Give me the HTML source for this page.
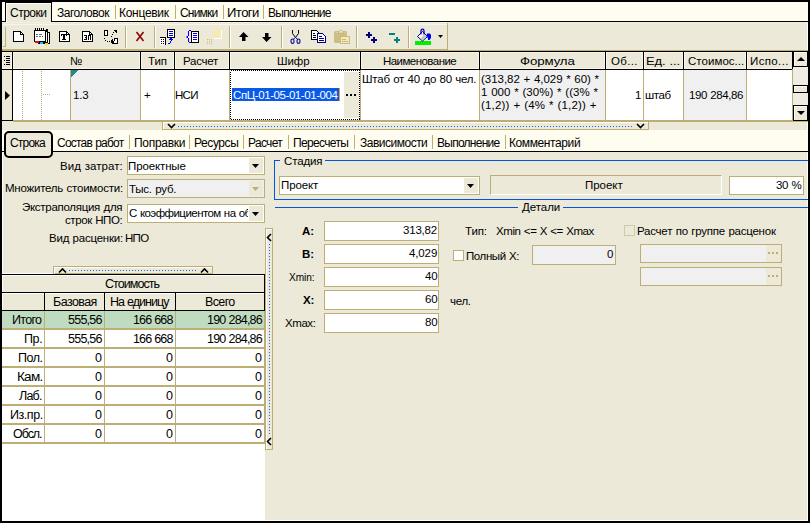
<!DOCTYPE html>
<html><head><meta charset="utf-8">
<style>
*{margin:0;padding:0;box-sizing:border-box}
html,body{width:810px;height:523px;overflow:hidden;background:#000}
body{position:relative;font-family:"Liberation Sans",sans-serif;font-size:11.5px;letter-spacing:-0.1px;word-spacing:0.5px;color:#000}
.a{position:absolute}
.t{position:absolute;white-space:nowrap;line-height:13px}
.ol{background:#BDAE76}
.bk{background:#000}
.wh{background:#fff}
.bgc{background:#ECE9D8}
.cr{background:#FFFDF0}
.gr{background:#F0F0F0}
.c{text-align:center}
.r{text-align:right}
.fld{position:absolute;border:1px solid #BDAE76;background:#fff}
.tb{font-size:12px}
.sm{font-size:12.5px;letter-spacing:-0.7px}
.blu{background:#0055E5}
svg{position:absolute;overflow:visible}
</style></head><body>
<!-- main window bg -->
<div class="a bgc" style="left:2px;top:2px;width:806px;height:519px"></div>
<div class="a" style="left:2px;top:520px;width:806px;height:1px;background:#FFFDF0"></div>
<div class="a" style="left:807px;top:22px;width:1px;height:499px;background:#FFFDF0"></div>

<!-- ===== top tab strip ===== -->
<div class="a cr" style="left:2px;top:2px;width:806px;height:19px"></div>
<div class="a bk" style="left:2px;top:21px;width:806px;height:1px"></div>
<div class="a bk" style="left:5px;top:2px;width:1px;height:20px"></div>
<div class="a bgc" style="left:6px;top:2px;width:45px;height:20px;border-top:1px solid #000;"></div>
<div class="a" style="left:6px;top:3px;width:1px;height:19px;background:#fff"></div>
<div class="a" style="left:6px;top:3px;width:45px;height:1px;background:#fff"></div>
<div class="a bk" style="left:51px;top:2px;width:1px;height:20px"></div>
<div class="a ol" style="left:115px;top:5px;width:1px;height:14px"></div>
<div class="a ol" style="left:175px;top:5px;width:1px;height:14px"></div>
<div class="a ol" style="left:223px;top:5px;width:1px;height:14px"></div>
<div class="a ol" style="left:263px;top:5px;width:1px;height:14px"></div>

<!-- ===== toolbar ===== -->
<div class="a" style="left:2px;top:22px;width:806px;height:1px;background:#F2F0E6"></div><div class="a" style="left:2px;top:24px;width:446px;height:1px;background:#F5F4EF"></div>
<div class="a ol" style="left:447px;top:23px;width:1px;height:27px"></div>
<div class="a ol" style="left:2px;top:49px;width:446px;height:1px"></div>
<div class="a ol" style="left:2px;top:50px;width:806px;height:1px"></div>
<!-- grip -->
<div class="a ol" style="left:5px;top:27px;width:1px;height:20px"></div>
<div class="a ol" style="left:3px;top:46px;width:3px;height:1px"></div>
<!-- separators -->
<div class="a ol" style="left:125px;top:26px;width:1px;height:22px"></div><div class="a wh" style="left:126px;top:26px;width:1px;height:22px"></div>
<div class="a ol" style="left:154px;top:26px;width:1px;height:22px"></div><div class="a wh" style="left:155px;top:26px;width:1px;height:22px"></div>
<div class="a ol" style="left:229px;top:26px;width:1px;height:22px"></div><div class="a wh" style="left:230px;top:26px;width:1px;height:22px"></div>
<div class="a ol" style="left:281px;top:26px;width:1px;height:22px"></div><div class="a wh" style="left:282px;top:26px;width:1px;height:22px"></div>
<div class="a ol" style="left:356px;top:26px;width:1px;height:22px"></div><div class="a wh" style="left:357px;top:26px;width:1px;height:22px"></div>
<div class="a ol" style="left:408px;top:26px;width:1px;height:22px"></div><div class="a wh" style="left:409px;top:26px;width:1px;height:22px"></div>
<svg width="810" height="60" style="left:0;top:0" shape-rendering="crispEdges">
<!-- icon1 new doc -->
<path d="M13.5 31.5H20.5L23.5 34.5V41.5H13.5Z" fill="#fff" stroke="#000"/>
<path d="M20.5 31.5V34.5H23.5" fill="none" stroke="#000"/>
<!-- icon2 notepad -->
<rect x="38.5" y="32.5" width="11" height="11" fill="#fff" stroke="#000"/>
<rect x="36.5" y="31.5" width="11" height="11" fill="#fff" stroke="#000"/>
<rect x="34.5" y="30.5" width="11" height="11" fill="#fff" stroke="#000"/>
<path d="M35 30V28M37 30V28M39 30V28M41 30V28M43 30V28" stroke="#000"/>
<rect x="46" y="29" width="2" height="2" fill="#000"/>
<path d="M36 34H38M39 34H42M36 36H38M39 36H41M42 36H43" stroke="#666"/>
<rect x="35" y="41" width="4" height="2" fill="#f00"/>
<rect x="40" y="42" width="3" height="2" fill="#0cf"/>
<rect x="45" y="43" width="3" height="2" fill="#fd0"/>
<!-- icon3 T doc -->
<path d="M59.5 31.5H66.5L69.5 34.5V41.5H59.5Z" fill="#fff" stroke="#000"/>
<path d="M66.5 31.5V34.5H69.5" fill="none" stroke="#000"/>
<path d="M61 34H67V35H61ZM61 35H62V36H61ZM66 35H67V36H66ZM63 35H65V39H63ZM62 39H66V40H62Z" fill="#000"/>
<!-- icon4 doc -->
<path d="M82.5 31.5H89.5L92.5 34.5V41.5H82.5Z" fill="#fff" stroke="#000"/>
<path d="M89.5 31.5V34.5H92.5" fill="none" stroke="#000"/>
<path d="M84 35H87V40H84V39H86V38H85V37H86V36H84ZM88 35H91V40H90V36H89V40H88Z" fill="#000"/>
<!-- icon5 -->
<path d="M104.5 30.5H107.5V35.5H104.5Z" fill="#fff" stroke="#000"/>
<path d="M114.5 38.5H117.5V43.5H113.5Z" fill="#fff" stroke="#000"/>
<path d="M104 38h1v1h-1zM105 40h1v1h-1zM107 41h1v1h-1zM109 41h1v1h-1zM112 39h1v5h-1zM111 40h1v3h-1zM111 36h1v1h-1zM112 34h1v1h-1zM113 32h1v1h-1zM114 30h3v1h-3zM116 31h1v2h-1zM115 31h1v1h-1z" fill="#000"/>
<!-- X -->
<path d="M136.5 32L143.5 41M143.5 32L136.5 41" stroke="#8E0C0C" stroke-width="1.7" shape-rendering="auto"/>
<!-- icon7 -->
<rect x="167" y="29" width="8" height="9" fill="#000"/>
<rect x="168" y="30" width="6" height="7" fill="#fff"/>
<path d="M169 31.5H173M169 33.5H173M169 35.5H173" stroke="#00f" shape-rendering="crispEdges"/>
<path d="M160 37h5v1h-5zM165 37h1v8h-1z" fill="#000"/>
<rect x="160" y="38" width="5" height="7" fill="#fff"/>
<path d="M161 39h1v1h-1zM163 39h1v1h-1zM161 41h1v1h-1zM163 41h1v1h-1zM161 43h1v1h-1zM163 43h1v1h-1z" fill="#000"/>
<path d="M168 43h2v1h-2zM170 41h1v2h-1zM171 40h1v1h-1zM169 39h4v1h-4zM170 38h2v1h-2z" fill="#00f"/>
<!-- icon8 brace -->
<path d="M189 30h2v1h-2zM188 31h1v5h-1zM187 36h1v1h-1zM186 36.5h1v1h-1zM187 37h1v1h-1zM188 38h1v4h-1zM189 42h2v1h-2z" fill="#00f" shape-rendering="auto"/>
<path d="M188.5 31V36M188.5 38V42" stroke="#00f" stroke-width="1"/>
<rect x="191" y="31" width="8" height="12" fill="#000"/>
<rect x="192" y="32" width="6" height="10" fill="#fff"/>
<path d="M193 33.5H197M193 35.5H197M193 37.5H197M193 39.5H197" stroke="#00f"/>
<!-- icon9 disabled -->
<rect x="213" y="29" width="8" height="9" fill="#F5E9B8"/>
<path d="M221 30V38H214" stroke="#fff" fill="none"/>
<path d="M207 39h1v1h-1zM209 39h1v1h-1zM207 41h1v1h-1zM209 41h1v1h-1zM207 43h1v1h-1zM209 43h1v1h-1z" fill="#C9B977"/>
<path d="M211 39h1v6h-1z" fill="#D8CC9A"/>
<!-- up arrow -->
<path d="M243.5 32L248.5 37H245.5V41H242V37H239Z" fill="#000" shape-rendering="auto"/>
<!-- down arrow -->
<path d="M266.5 42L271.5 37H268.5V33H265V37H262Z" fill="#000" shape-rendering="auto"/>
<!-- scissors -->
<path d="M292.5 30V33.5L295.5 37.5M298.5 30V33.5L295.5 37.5" stroke="#000" stroke-width="1" fill="none" shape-rendering="auto"/>
<ellipse cx="292.5" cy="41.2" rx="1.5" ry="2.2" fill="none" stroke="#10109A" stroke-width="1.1" shape-rendering="auto"/>
<ellipse cx="298.5" cy="41.2" rx="1.5" ry="2.2" fill="none" stroke="#10109A" stroke-width="1.1" shape-rendering="auto"/>
<path d="M295.5 37.5L293.5 39M295.5 37.5L297.5 39" stroke="#10109A" stroke-width="1" shape-rendering="auto"/>
<!-- copy -->
<path d="M311.5 30.5H316.5L318.5 32.5V39.5H311.5Z" fill="#fff" stroke="#000"/>
<path d="M313 33H315M313 35H316M313 37H316" stroke="#000"/>
<path d="M317.5 33.5H322.5L325.5 36.5V42.5H317.5Z" fill="#fff" stroke="#000080"/>
<path d="M319 36H322M319 38H324M319 40H324" stroke="#000080"/>
<!-- paste disabled -->
<rect x="334" y="31" width="13" height="12" rx="1.5" fill="#CDBE86" shape-rendering="auto"/>
<path d="M336 32.5H345" stroke="#DCD0A4"/>
<path d="M338 33L340.5 30H341.5L344 33Z" fill="#F3EDD2" stroke="#BFAE6E" stroke-width="0.8" shape-rendering="auto"/>
<rect x="340.5" y="36.5" width="9" height="7" fill="#F2E8BC" stroke="#C9B97E"/>
<path d="M342 39.5H346M342 41.5H348" stroke="#C9B97E"/>
<!-- ++ -->
<path d="M366 35H372M369 32V38M371 40H377M374 37V43" stroke="#000080" stroke-width="2"/>
<!-- -+ -->
<path d="M389 34H395M394 40H400M397 37V43" stroke="#008080" stroke-width="2"/>
<!-- paint bucket -->
<rect x="415" y="41" width="16" height="4" fill="#00F000"/>
<path d="M417.5 36.5L422.5 31.5L427.5 36.5L422.5 41Z" fill="#fff" stroke="#000070" stroke-width="1" shape-rendering="auto"/>
<path d="M422.5 40L426.5 36.5L424 34.5L421 38Z" fill="#C8C8C8" shape-rendering="auto"/>
<path d="M421 34.5V31Q421 29.2 422.5 29.2Q424 29.2 424 31V34.5" fill="none" stroke="#0000A0" stroke-width="1.3" shape-rendering="auto"/>
<path d="M427 33.5H430L431 35V38L429.5 40H428V37.5H426.5Z" fill="#0000F0" shape-rendering="auto"/>
<path d="M438 35H443L440.5 38Z" fill="#000" shape-rendering="auto"/>
</svg>


<!-- ===== grid ===== -->
<div class="a bk" style="left:2px;top:51px;width:806px;height:1px"></div>
<div class="a bk" style="left:2px;top:69px;width:791px;height:1px"></div>
<!-- header highlight -->
<div class="a" style="left:2px;top:52px;width:790px;height:1px;background:#F7F5EE"></div>
<div class="a" style="left:13px;top:52px;width:1px;height:17px;background:#F9F8F2"></div>
<div class="a" style="left:11px;top:52px;width:1px;height:17px;background:#F6F4EC"></div>
<div class="a" style="left:141px;top:52px;width:1px;height:17px;background:#F9F8F2"></div>
<div class="a" style="left:139px;top:52px;width:1px;height:17px;background:#F6F4EC"></div>
<div class="a" style="left:175px;top:52px;width:1px;height:17px;background:#F9F8F2"></div>
<div class="a" style="left:173px;top:52px;width:1px;height:17px;background:#F6F4EC"></div>
<div class="a" style="left:230px;top:52px;width:1px;height:17px;background:#F9F8F2"></div>
<div class="a" style="left:228px;top:52px;width:1px;height:17px;background:#F6F4EC"></div>
<div class="a" style="left:361px;top:52px;width:1px;height:17px;background:#F9F8F2"></div>
<div class="a" style="left:359px;top:52px;width:1px;height:17px;background:#F6F4EC"></div>
<div class="a" style="left:480px;top:52px;width:1px;height:17px;background:#F9F8F2"></div>
<div class="a" style="left:478px;top:52px;width:1px;height:17px;background:#F6F4EC"></div>
<div class="a" style="left:606px;top:52px;width:1px;height:17px;background:#F9F8F2"></div>
<div class="a" style="left:604px;top:52px;width:1px;height:17px;background:#F6F4EC"></div>
<div class="a" style="left:644px;top:52px;width:1px;height:17px;background:#F9F8F2"></div>
<div class="a" style="left:642px;top:52px;width:1px;height:17px;background:#F6F4EC"></div>
<div class="a" style="left:684px;top:52px;width:1px;height:17px;background:#F9F8F2"></div>
<div class="a" style="left:682px;top:52px;width:1px;height:17px;background:#F6F4EC"></div>
<div class="a" style="left:747px;top:52px;width:1px;height:17px;background:#F9F8F2"></div>
<div class="a" style="left:745px;top:52px;width:1px;height:17px;background:#F6F4EC"></div>
<div class="a" style="left:2px;top:68px;width:790px;height:1px;background:#F6F4EC"></div>
<div class="a" style="left:2px;top:52px;width:1px;height:17px;background:#F9F8F2"></div>
<!-- row bg -->
<div class="a wh" style="left:13px;top:70px;width:779px;height:50px"></div>
<div class="a gr" style="left:71px;top:70px;width:69px;height:50px"></div>
<div class="a gr" style="left:480px;top:70px;width:125px;height:50px"></div>
<div class="a gr" style="left:684px;top:70px;width:62px;height:50px"></div>
<div class="a ol" style="left:2px;top:120px;width:806px;height:2px"></div>
<!-- header col lines black -->
<div class="a bk" style="left:12px;top:51px;width:1px;height:70px"></div>
<div class="a bk" style="left:140px;top:51px;width:1px;height:19px"></div>
<div class="a bk" style="left:174px;top:51px;width:1px;height:19px"></div>
<div class="a bk" style="left:229px;top:51px;width:1px;height:19px"></div>
<div class="a bk" style="left:360px;top:51px;width:1px;height:19px"></div>
<div class="a bk" style="left:479px;top:51px;width:1px;height:19px"></div>
<div class="a bk" style="left:605px;top:51px;width:1px;height:19px"></div>
<div class="a bk" style="left:643px;top:51px;width:1px;height:19px"></div>
<div class="a bk" style="left:683px;top:51px;width:1px;height:19px"></div>
<div class="a bk" style="left:746px;top:51px;width:1px;height:19px"></div>
<div class="a bk" style="left:792px;top:51px;width:2px;height:19px"></div>
<!-- row col lines olive -->
<div class="a ol" style="left:70px;top:70px;width:1px;height:50px"></div>
<div class="a ol" style="left:140px;top:70px;width:1px;height:50px"></div>
<div class="a ol" style="left:174px;top:70px;width:1px;height:50px"></div>
<div class="a ol" style="left:229px;top:70px;width:1px;height:50px"></div>
<div class="a ol" style="left:360px;top:70px;width:1px;height:50px"></div>
<div class="a ol" style="left:479px;top:70px;width:1px;height:50px"></div>
<div class="a ol" style="left:605px;top:70px;width:1px;height:50px"></div>
<div class="a ol" style="left:643px;top:70px;width:1px;height:50px"></div>
<div class="a ol" style="left:683px;top:70px;width:1px;height:50px"></div>
<div class="a ol" style="left:746px;top:70px;width:1px;height:50px"></div>
<!-- header texts -->
<!-- row texts -->
<div class="a" style="left:232px;top:88px;width:107px;height:13px;background:#0A5AE8"></div><div class="a" style="left:339px;top:88px;width:1px;height:13px;background:#F0A020"></div>
<div class="a bgc" style="left:344px;top:72px;width:15px;height:46px"></div>
<svg width="810" height="140" style="left:0;top:0" shape-rendering="crispEdges">
<!-- header list icon -->
<path d="M4 56h1v1h-1zM6 56h4v1h-4zM6 58h4v1h-4zM4 60h1v1h-1zM6 60h4v1h-4zM6 62h4v1h-4zM4 64h1v1h-1zM6 64h4v1h-4z" fill="#000"/>
<!-- row indicator triangle -->
<path d="M5 91L10 95.5L5 100Z" fill="#000" shape-rendering="auto"/>
<!-- tree dotted lines -->
<path d="M22.5 71V120M41.5 71V120" stroke="#BDAE76" stroke-dasharray="1 1"/>
<path d="M43 94.5H51" stroke="#BDAE76" stroke-dasharray="1 1"/>
<path d="M2 120.5H13" stroke="#000"/><path d="M2 121.5H13" stroke="#ECE9D8"/>
<!-- teal corner -->
<path d="M71 70H78L71 77Z" fill="#1E8C8C"/>
<!-- focus rect -->
<rect x="230.5" y="70.5" width="129" height="49" fill="none" stroke="#000" stroke-dasharray="1 1"/>
<!-- ... button dots -->
<path d="M346 94h2v2h-2zM350 94h2v2h-2zM354 94h2v2h-2z" fill="#000"/>
<!-- scrollbar -->
<rect x="793" y="52" width="15" height="69" fill="#F5F3EC"/>
<path d="M793 67h15v18h-15z" fill="#EFEDE3"/>
<path d="M793 93h15v13h-15z" fill="#EFEDE3"/>
<rect x="793.5" y="51.5" width="14" height="15" fill="#ECE9D8" stroke="#000"/>
<path d="M794.5 66V52.5H807" stroke="#fff" fill="none"/>
<path d="M797 61H805L801 57Z" fill="#000" shape-rendering="auto"/>
<rect x="793.5" y="85.5" width="14" height="7" fill="#ECE9D8" stroke="#000"/>
<path d="M794.5 92V86.5H807" stroke="#fff" fill="none"/>
<rect x="793.5" y="105.5" width="14" height="15" fill="#ECE9D8" stroke="#000"/>
<path d="M794.5 120V106.5H807" stroke="#fff" fill="none"/>
<path d="M797 111H805L801 115Z" fill="#000" shape-rendering="auto"/>
<path d="M792.5 69V121" stroke="#BDAE76"/>
<!-- grid splitter handle -->
<rect x="162" y="122" width="487" height="8" fill="#ECE9D8"/>
<path d="M162.5 122V130M162 129.5H649M648.5 122V130" stroke="#BDAE76"/>
<path d="M163 122.5H648M163.5 122V129" stroke="#fff"/>
<path d="M168 124L171.5 127.5L175 124" fill="none" stroke="#000" stroke-width="1.6" shape-rendering="auto"/>
<path d="M637 124L640.5 127.5L644 124" fill="none" stroke="#000" stroke-width="1.6" shape-rendering="auto"/>
<path d="M178 126.5H633" stroke="#2060F0" stroke-dasharray="1 2"/>
</svg>


<!-- ===== lower tab strip ===== -->
<div class="a cr" style="left:2px;top:130px;width:806px;height:21px"></div>
<div class="a bk" style="left:2px;top:151px;width:806px;height:1px"></div>
<div class="a bgc" style="left:4px;top:131px;width:49px;height:27px;border:2px solid #000;border-radius:5px"></div>
<div class="a ol" style="left:129px;top:135px;width:1px;height:14px"></div>
<div class="a ol" style="left:189px;top:135px;width:1px;height:14px"></div>
<div class="a ol" style="left:243px;top:135px;width:1px;height:14px"></div>
<div class="a ol" style="left:288px;top:135px;width:1px;height:14px"></div>
<div class="a ol" style="left:354px;top:135px;width:1px;height:14px"></div>
<div class="a ol" style="left:432px;top:135px;width:1px;height:14px"></div>
<div class="a ol" style="left:505px;top:135px;width:1px;height:14px"></div>

<!-- ===== left form ===== -->
<div class="a" style="left:2px;top:152px;width:1px;height:292px;background:#fff"></div>
<div class="fld" style="left:127px;top:156px;width:138px;height:19px"></div>
<div class="fld" style="left:127px;top:179px;width:138px;height:19px;background:#F0F0F0"></div>
<div class="fld" style="left:127px;top:204px;width:138px;height:19px;overflow:hidden"></div>

<!-- ===== right form: Стадия ===== -->
<div class="a blu" style="left:274px;top:160px;width:1px;height:40px"></div>
<div class="a blu" style="left:274px;top:199px;width:534px;height:1px"></div>
<div class="a blu" style="left:274px;top:160px;width:6px;height:1px"></div>
<div class="a blu" style="left:325px;top:160px;width:483px;height:1px"></div>
<div class="fld" style="left:279px;top:176px;width:201px;height:19px"></div>
<div class="a" style="left:490px;top:175px;width:232px;height:20px;border-top:1px solid #BDAE76;border-left:1px solid #BDAE76;border-right:1px solid #fff;border-bottom:1px solid #fff"></div>
<div class="fld" style="left:729px;top:176px;width:75px;height:19px"></div>

<!-- ===== Детали ===== -->
<div class="a blu" style="left:275px;top:207px;width:243px;height:1px"></div>
<div class="a blu" style="left:563px;top:207px;width:245px;height:1px"></div>

<div class="fld" style="left:324px;top:221px;width:115px;height:20px"></div>
<div class="fld" style="left:324px;top:244px;width:115px;height:20px"></div>
<div class="fld" style="left:324px;top:267px;width:115px;height:20px"></div>
<div class="fld" style="left:324px;top:290px;width:115px;height:20px"></div>
<div class="fld" style="left:324px;top:313px;width:115px;height:20px"></div>
<div class="a" style="left:453px;top:250px;width:11px;height:11px;border:1px solid #BDAE76;background:#fff"></div>
<div class="fld" style="left:532px;top:245px;width:84px;height:20px;background:#F0F0F0"></div>
<div class="a" style="left:624px;top:225px;width:11px;height:11px;border:1px solid #D0C8A8"></div>
<div class="fld" style="left:640px;top:244px;width:142px;height:19px;background:#F0F0F0"></div>
<div class="fld" style="left:640px;top:267px;width:142px;height:19px;background:#F0F0F0"></div>

<!-- ===== table ===== -->
<div class="a wh" style="left:2px;top:311px;width:263px;height:209px"></div>
<div class="a" style="left:2px;top:273px;width:51px;height:1px;background:#fff"></div>
<div class="a bk" style="left:2px;top:274px;width:263px;height:1px"></div>
<div class="a bk" style="left:2px;top:292px;width:263px;height:1px"></div>
<div class="a bk" style="left:2px;top:310px;width:263px;height:1px"></div>
<div class="a bk" style="left:264px;top:274px;width:1px;height:37px"></div>
<div class="a bk" style="left:44px;top:292px;width:1px;height:19px"></div>
<div class="a bk" style="left:104px;top:292px;width:1px;height:19px"></div>
<div class="a bk" style="left:175px;top:292px;width:1px;height:19px"></div>
<div class="a" style="left:2px;top:275px;width:262px;height:1px;background:#fff"></div>
<div class="a" style="left:2px;top:293px;width:262px;height:1px;background:#fff"></div>
<div class="a bk" style="left:44px;top:292px;width:1px;height:19px"></div><div class="a bk" style="left:104px;top:292px;width:1px;height:19px"></div><div class="a bk" style="left:175px;top:292px;width:1px;height:19px"></div>
<div class="a" style="left:2px;top:311px;width:262px;height:17px;background:#C0DCC0"></div>
<div class="a ol" style="left:2px;top:328px;width:264px;height:2px"></div>
<div class="a ol" style="left:2px;top:347px;width:264px;height:2px"></div>
<div class="a ol" style="left:2px;top:366px;width:264px;height:2px"></div>
<div class="a ol" style="left:2px;top:385px;width:264px;height:2px"></div>
<div class="a ol" style="left:2px;top:404px;width:264px;height:2px"></div>
<div class="a ol" style="left:2px;top:423px;width:264px;height:2px"></div>
<div class="a ol" style="left:2px;top:442px;width:264px;height:2px"></div>
<div class="a ol" style="left:44px;top:311px;width:1px;height:133px"></div>
<div class="a ol" style="left:104px;top:311px;width:1px;height:133px"></div>
<div class="a ol" style="left:175px;top:311px;width:1px;height:133px"></div>
<div class="a ol" style="left:264px;top:311px;width:2px;height:133px"></div>
<svg width="810" height="523" style="left:0;top:0" shape-rendering="crispEdges">
<!-- combo buttons -->
<rect x="249" y="158" width="14" height="15" fill="#ECE9D8"/>
<path d="M252 164H259L255.5 168Z" fill="#000" shape-rendering="auto"/>
<rect x="249" y="181" width="14" height="15" fill="#ECE9D8"/>
<path d="M252 187H259L255.5 191Z" fill="#BDAE76" shape-rendering="auto"/>
<rect x="249" y="206" width="14" height="15" fill="#ECE9D8"/>
<path d="M252 212H259L255.5 216Z" fill="#000" shape-rendering="auto"/>
<rect x="464" y="178" width="14" height="15" fill="#ECE9D8"/>
<path d="M467 184H474L470.5 188Z" fill="#000" shape-rendering="auto"/>
<!-- ... buttons right fields -->
<rect x="766" y="245" width="15" height="17" fill="#ECE9D8"/>
<path d="M768 252h2v2h-2zM772 252h2v2h-2zM776 252h2v2h-2z" fill="#BDAE76"/>
<rect x="766" y="268" width="15" height="17" fill="#ECE9D8"/>
<path d="M768 275h2v2h-2zM772 275h2v2h-2zM776 275h2v2h-2z" fill="#BDAE76"/>
<!-- table splitter handle -->
<rect x="53" y="266" width="160" height="8" fill="#ECE9D8"/>
<path d="M53.5 266V274M53 266.5H213M212.5 266V274M53 273.5H213" stroke="#BDAE76"/>
<path d="M54 267.5H212M54.5 267V274" stroke="#fff"/>
<path d="M59 272.5L62.5 269L66 272.5" fill="none" stroke="#000" stroke-width="1.6" shape-rendering="auto"/>
<path d="M201 272.5L204.5 269L208 272.5" fill="none" stroke="#000" stroke-width="1.6" shape-rendering="auto"/>
<path d="M69 270.5H197" stroke="#2060F0" stroke-dasharray="1 2"/>
<!-- vertical splitter handle -->
<rect x="265" y="228" width="8" height="222" fill="#ECE9D8"/>
<path d="M265.5 228V450M265 228.5H273M272.5 228V450M265 449.5H273" stroke="#BDAE76"/>
<path d="M266.5 229V449M266 229.5H272" stroke="#fff"/>
<path d="M271 234L267.5 237.5L271 241" fill="none" stroke="#000" stroke-width="1.6" shape-rendering="auto"/>
<path d="M271 438L267.5 441.5L271 445" fill="none" stroke="#000" stroke-width="1.6" shape-rendering="auto"/>
<path d="M269.5 244V435" stroke="#2060F0" stroke-dasharray="1 2"/>
</svg>

<div class="t tb" style="left:10px;top:7px;letter-spacing:-0.5px">Строки</div>
<div class="t tb" style="left:57px;top:7px;letter-spacing:-0.5px">Заголовок</div>
<div class="t tb" style="left:119px;top:7px;letter-spacing:-0.286px">Концевик</div>
<div class="t tb" style="left:180px;top:7px;letter-spacing:-0.8px">Снимки</div>
<div class="t tb" style="left:227px;top:7px;letter-spacing:-0.5px;transform:scaleX(1.089);transform-origin:0 0">Итоги</div>
<div class="t tb" style="left:268px;top:7px;letter-spacing:-0.7px">Выполнение</div>
<div class="t" style="left:70px;top:55px;letter-spacing:-0.1px">№</div>
<div class="t" style="left:148px;top:55px;letter-spacing:-0.1px">Тип</div>
<div class="t" style="left:183px;top:55px;letter-spacing:-0.24px">Расчет</div>
<div class="t" style="left:277px;top:55px;letter-spacing:-0.1px">Шифр</div>
<div class="t" style="left:383px;top:55px;letter-spacing:-0.545px">Наименование</div>
<div class="t" style="left:520px;top:55px;letter-spacing:-0.1px;transform:scaleX(1.153);transform-origin:0 0">Формула</div>
<div class="t" style="left:611px;top:55px;letter-spacing:0.325px">Об...</div>
<div class="t" style="left:646px;top:55px;letter-spacing:-0.1px;transform:scaleX(1.129);transform-origin:0 0">Ед. ...</div>
<div class="t" style="left:688px;top:55px;letter-spacing:0.044px">Стоимос...</div>
<div class="t" style="left:750px;top:55px;letter-spacing:0.367px">Испо...</div>
<div class="t" style="left:73px;top:89px;letter-spacing:-0.2px">1.3</div>
<div class="t" style="left:144px;top:89px;letter-spacing:-0.1px">+</div>
<div class="t" style="left:175px;top:89px;letter-spacing:-0.7px">НСИ</div>
<div class="t" style="left:233px;top:89px;letter-spacing:-0.422px;color:#fff">СпЦ-01-05-01-01-004</div>
<div class="t" style="left:362px;top:73px;letter-spacing:-0.23px">Штаб от 40 до 80 чел.</div>
<div class="t" style="left:481px;top:73px;letter-spacing:-0.023px">(313,82 + 4,029 * 60) *</div>
<div class="t" style="left:481px;top:86px;letter-spacing:0.038px">1 000 * (30%) * ((3% *</div>
<div class="t" style="left:481px;top:99px;letter-spacing:0.173px">(1,2)) + (4% * (1,2)) +</div>
<div class="t" style="left:635px;top:89px;letter-spacing:-0.1px">1</div>
<div class="t" style="left:645px;top:89px;letter-spacing:-0.4px">штаб</div>
<div class="t" style="left:689px;top:89px;letter-spacing:-0.4px">190 284,86</div>
<div class="t tb" style="left:10px;top:137px;letter-spacing:-0.8px">Строка</div>
<div class="t tb" style="left:57px;top:137px;letter-spacing:-0.773px">Состав работ</div>
<div class="t tb" style="left:134px;top:137px;letter-spacing:-0.3px">Поправки</div>
<div class="t tb" style="left:194px;top:137px;letter-spacing:-0.425px">Ресурсы</div>
<div class="t tb" style="left:248px;top:137px;letter-spacing:-0.68px">Расчет</div>
<div class="t tb" style="left:293px;top:137px;letter-spacing:-0.65px">Пересчеты</div>
<div class="t tb" style="left:360px;top:137px;letter-spacing:-0.5px">Зависимости</div>
<div class="t tb" style="left:437px;top:137px;letter-spacing:-0.733px">Выполнение</div>
<div class="t tb" style="left:509px;top:137px;letter-spacing:-0.4px">Комментарий</div>
<div class="t" style="left:60px;top:160px;letter-spacing:0.05px">Вид затрат:</div>
<div class="t" style="left:5px;top:182px;letter-spacing:-0.232px">Множитель стоимости:</div>
<div class="t" style="left:22px;top:201px;letter-spacing:-0.287px">Экстраполяция для</div>
<div class="t" style="left:65px;top:214px;letter-spacing:-0.389px">строк НПО:</div>
<div class="t" style="left:49px;top:232px;letter-spacing:-0.225px">Вид расценки:</div>
<div class="t" style="left:125px;top:232px;letter-spacing:-0.7px">НПО</div>
<div class="t" style="left:128px;top:160px;letter-spacing:-0.125px">Проектные</div>
<div class="t" style="left:129px;top:183px;letter-spacing:-0.237px">Тыс. руб.</div>
<div class="t" style="left:284px;top:155px;letter-spacing:-0.12px">Стадия</div>
<div class="t" style="left:281px;top:179px;letter-spacing:-0.1px">Проект</div>
<div class="t" style="left:585px;top:179px;letter-spacing:-0.02px">Проект</div>
<div class="t" style="left:776px;top:179px;letter-spacing:-0.367px">30 %</div>
<div class="t" style="left:522px;top:201px;letter-spacing:-0.04px">Детали</div>
<div class="t" style="left:302px;top:225px;letter-spacing:-0.1px;font-weight:bold">A:</div>
<div class="t" style="left:302px;top:248px;letter-spacing:-0.1px;font-weight:bold">B:</div>
<div class="t" style="left:289px;top:271px;letter-spacing:-0.1px;transform:scaleX(0.879);transform-origin:0 0">Xmin:</div>
<div class="t" style="left:303px;top:294px;letter-spacing:-0.1px;font-weight:bold">X:</div>
<div class="t" style="left:285px;top:317px;letter-spacing:-0.425px">Xmax:</div>
<div class="t" style="left:403px;top:224px;letter-spacing:-0.2px">313,82</div>
<div class="t" style="left:409px;top:247px;letter-spacing:-0.125px">4,029</div>
<div class="t" style="left:425px;top:270px;letter-spacing:-0.1px">40</div>
<div class="t" style="left:425px;top:293px;letter-spacing:-0.1px">60</div>
<div class="t" style="left:425px;top:316px;letter-spacing:-0.1px">80</div>
<div class="t" style="left:465px;top:225px;letter-spacing:-0.1px">Тип:</div>
<div class="t" style="left:496px;top:225px;letter-spacing:-0.413px">Xmin &lt;= X &lt;= Xmax</div>
<div class="t" style="left:466px;top:250px;letter-spacing:-0.412px">Полный X:</div>
<div class="t" style="left:607px;top:248px;letter-spacing:-0.1px">0</div>
<div class="t" style="left:450px;top:295px;letter-spacing:-0.3px">чел.</div>
<div class="t" style="left:637px;top:225px;letter-spacing:-0.233px">Расчет по группе расценок</div>
<div class="t sm" style="left:105px;top:278px;letter-spacing:-0.95px">Стоимость</div>
<div class="t sm" style="left:53px;top:296px;letter-spacing:-0.567px">Базовая</div>
<div class="t sm" style="left:110px;top:296px;letter-spacing:-0.967px">На единицу</div>
<div class="t sm" style="left:205px;top:296px;letter-spacing:-0.625px">Всего</div>
<div class="t sm" style="left:12px;top:314px;letter-spacing:-0.675px">Итого</div>
<div class="t sm" style="left:68px;top:314px;letter-spacing:-0.76px">555,56</div>
<div class="t sm" style="left:133px;top:314px;letter-spacing:-0.883px">166 668</div>
<div class="t sm" style="left:207px;top:314px;letter-spacing:-0.822px">190 284,86</div>
<div class="t sm" style="left:24px;top:333px;letter-spacing:-0.4px">Пр.</div>
<div class="t sm" style="left:68px;top:333px;letter-spacing:-0.76px">555,56</div>
<div class="t sm" style="left:133px;top:333px;letter-spacing:-0.883px">166 668</div>
<div class="t sm" style="left:207px;top:333px;letter-spacing:-0.822px">190 284,86</div>
<div class="t sm" style="left:18px;top:352px;letter-spacing:-0.467px">Пол.</div>
<div class="t sm" style="left:95px;top:352px;letter-spacing:-0.7px">0</div>
<div class="t sm" style="left:166px;top:352px;letter-spacing:-0.7px">0</div>
<div class="t sm" style="left:255px;top:352px;letter-spacing:-0.7px">0</div>
<div class="t sm" style="left:17px;top:371px;letter-spacing:-0.7px;transform:scaleX(1.082);transform-origin:0 0">Кам.</div>
<div class="t sm" style="left:95px;top:371px;letter-spacing:-0.7px">0</div>
<div class="t sm" style="left:166px;top:371px;letter-spacing:-0.7px">0</div>
<div class="t sm" style="left:255px;top:371px;letter-spacing:-0.7px">0</div>
<div class="t sm" style="left:19px;top:390px;letter-spacing:-0.8px">Лаб.</div>
<div class="t sm" style="left:95px;top:390px;letter-spacing:-0.7px">0</div>
<div class="t sm" style="left:166px;top:390px;letter-spacing:-0.7px">0</div>
<div class="t sm" style="left:255px;top:390px;letter-spacing:-0.7px">0</div>
<div class="t sm" style="left:10px;top:409px;letter-spacing:-0.44px">Из.пр.</div>
<div class="t sm" style="left:95px;top:409px;letter-spacing:-0.7px">0</div>
<div class="t sm" style="left:166px;top:409px;letter-spacing:-0.7px">0</div>
<div class="t sm" style="left:255px;top:409px;letter-spacing:-0.7px">0</div>
<div class="t sm" style="left:13px;top:428px;letter-spacing:-1.05px">Обсл.</div>
<div class="t sm" style="left:95px;top:428px;letter-spacing:-0.7px">0</div>
<div class="t sm" style="left:166px;top:428px;letter-spacing:-0.7px">0</div>
<div class="t sm" style="left:255px;top:428px;letter-spacing:-0.7px">0</div>
<div class="t" style="left:129px;top:207px;width:119px;overflow:hidden;letter-spacing:-0.55px">С коэффициентом на об</div>
</body></html>
